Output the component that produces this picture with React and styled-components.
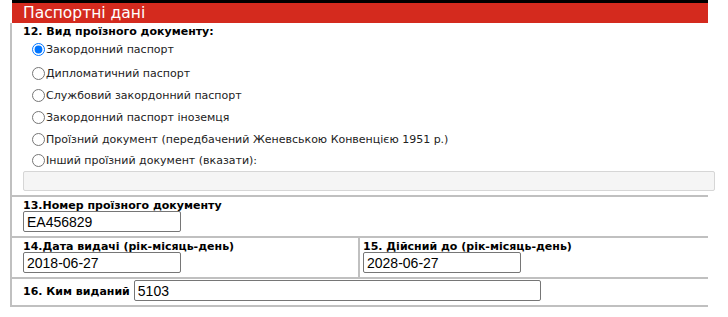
import React from 'react';
import styled, { createGlobalStyle } from 'styled-components';

const GlobalStyle = createGlobalStyle`
  html, body {
    margin: 0;
    padding: 0;
    background: #ffffff;
  }
  body {
    font-family: "DejaVu Sans", Verdana, sans-serif;
    color: #000;
  }
`;

const docTypes = [
  'Закордонний паспорт',
  'Дипломатичний паспорт',
  'Службовий закордонний паспорт',
  'Закордонний паспорт іноземця',
  'Проїзний документ (передбачений Женевською Конвенцією 1951 р.)',
  'Інший проїзний документ (вказати):',
];

const App = () => {
  return (
    <>
      <GlobalStyle />
      <Page>
        <SectionTitle>Паспортні дані</SectionTitle>
        <FormTable>
          <Row>
            <Cell>
              <Label>12. Вид проїзного документу:</Label>
              <RadioList>
                {docTypes.map((t, i) => (
                  <RadioRow
                    key={t}
                    $first={i === 0}
                    $last={i === docTypes.length - 1}
                  >
                    <Radio type="radio" name="doctype" defaultChecked={i === 0} />
                    <RadioText>{t}</RadioText>
                  </RadioRow>
                ))}
              </RadioList>
              <OtherInput type="text" disabled />
            </Cell>
          </Row>
          <Row>
            <Cell>
              <Label>13.Номер проїзного документу</Label>
              <TextInput type="text" defaultValue="EA456829" $width={158} />
            </Cell>
          </Row>
          <Row>
            <Cell $divider>
              <Label>14.Дата видачі (рік-місяць-день)</Label>
              <TextInput type="text" defaultValue="2018-06-27" $width={158} />
            </Cell>
            <Cell $second>
              <Label>15. Дійсний до (рік-місяць-день)</Label>
              <TextInput type="text" defaultValue="2028-06-27" $width={158} />
            </Cell>
          </Row>
          <Row>
            <InlineCell>
              <InlineLabel>16. Ким виданий</InlineLabel>
              <TextInput type="text" defaultValue="5103" $width={407} />
            </InlineCell>
          </Row>
        </FormTable>
      </Page>
    </>
  );
};

const Page = styled.div`
  padding-left: 10px;
  width: 698px;
`;

const SectionTitle = styled.div`
  margin-left: 2px;
  height: 20px;
  border-top: 3px solid #000;
  background: #d42a1e;
  color: #fff;
  font-size: 15.5px;
  line-height: 20px;
  padding-left: 11px;
`;

const FormTable = styled.div`
  border-left: 2px solid #c0c0c0;
  display: flex;
  flex-direction: column;
`;

const Row = styled.div`
  display: flex;
  border-bottom: 2px solid #c0c0c0;
`;

const Cell = styled.div`
  box-sizing: border-box;
  width: 348px;
  flex: ${p => (p.$second ? '0 0 348px' : '1 1 auto')};
  padding: 1px 0 4px ${p => (p.$second ? '3px' : '11px')};
  border-right: ${p => (p.$divider ? '2px solid #c0c0c0' : 'none')};
  display: flex;
  flex-direction: column;
  align-items: flex-start;
`;

const InlineCell = styled.div`
  display: flex;
  align-items: center;
  gap: 4px;
  padding: 1px 0 4px 11px;
`;

const Label = styled.div`
  font-size: 11px;
  font-weight: bold;
  line-height: 10px;
  padding-top: 3px;
`;

const InlineLabel = styled(Label)`
  padding-top: 2px;
`;

const RadioList = styled.div`
  display: flex;
  flex-direction: column;
  margin-top: 1px;
`;

const RadioRow = styled.label`
  display: flex;
  align-items: center;
  height: ${p => (p.$last ? '21px' : '22px')};
  margin-bottom: ${p => (p.$first ? '2px' : '0')};
  padding-left: 9px;
`;

const Radio = styled.input`
  width: 13px;
  height: 13px;
  margin: 0 1px 0 0;
  accent-color: #0075ff;
`;

const RadioText = styled.span`
  font-size: 11px;
  color: #222;
`;

const OtherInput = styled.input`
  width: 692px;
  height: 20px;
  box-sizing: border-box;
  margin: 0;
  border: 1px solid #d6d6d6;
  border-radius: 2px;
  background: #f5f5f5;
`;

const TextInput = styled.input`
  box-sizing: border-box;
  width: ${p => p.$width}px;
  height: 21px;
  margin: 0;
  padding: 1px 3px;
  border: 1px solid #767676;
  border-radius: 2px;
  font-family: "Liberation Sans", Arial, sans-serif;
  font-size: 14px;
  color: #000;
  background: #fff;
`;

export default App;
